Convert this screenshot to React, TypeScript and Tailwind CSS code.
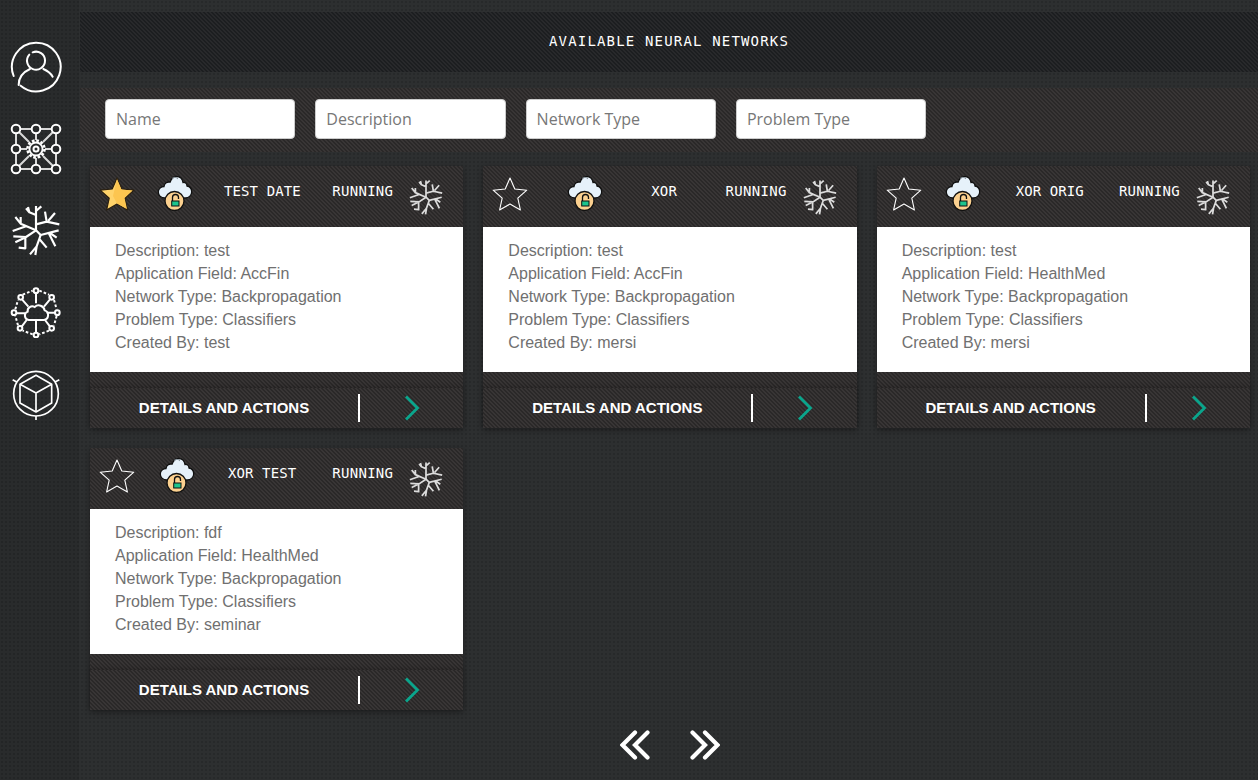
import React from 'react';

const dotted =
  'bg-[#2d2f30] bg-[radial-gradient(#27292a_1px,transparent_1px)] bg-[length:4px_4px]';
const striped =
  'bg-[#2a2828] bg-[linear-gradient(45deg,#383535_25%,transparent_25%,transparent_50%,#383535_50%,#383535_75%,transparent_75%)] bg-[length:4px_4px]';
const stripedDark =
  'bg-[#1c1e20] bg-[linear-gradient(45deg,#28292b_25%,transparent_25%,transparent_50%,#28292b_50%,#28292b_75%,transparent_75%)] bg-[length:4px_4px]';

const UserIcon = () => (
  <svg width="52" height="52" viewBox="30 63 156 156" fill="none" stroke="#fff" strokeWidth="6" strokeLinecap="round">
    <path d="M41 168A73 73 0 1 1 62 197" />
    <path d="M88 104A27 27 0 1 0 98 97" />
    <path d="M56 195C56 170 72 155 90 147M130 147C142 152 152 160 158 170" />
  </svg>
);

const NetworkIcon = () => {
  const xs = [6, 26, 46];
  return (
    <svg width="52" height="52" viewBox="0 0 52 52" fill="none" stroke="#fff" strokeWidth="2">
      <path stroke="#d8d8d8" d="M10 6h12M30 6h12M6 10v12M6 30v12M46 10v12M46 30v12M10 46h12M30 46h12M26 10v7M26 35v7M10 26h7M35 26h7M9 9l10 10M43 9L33 19M9 43l10-10M43 43L33 33" />
      {xs.map((x) =>
        xs.map((y) =>
          x === 26 && y === 26 ? null : <circle key={`${x}-${y}`} cx={x} cy={y} r="4.3" />,
        ),
      )}
      <circle cx="26" cy="26" r="2.5" />
      <circle cx="26" cy="26" r="6.5" strokeWidth="1.8" />
      <circle cx="26" cy="26" r="8.5" strokeWidth="2.6" strokeDasharray="2.7 1.75" />
    </svg>
  );
};

const TreeIcon = ({ size = 52, stroke = '#fff', width = 6.5 }: { size?: number; stroke?: string; width?: number }) => (
  <svg width={size} height={size} viewBox="30 19 156 156" fill="none" stroke={stroke} strokeWidth={width} strokeLinecap="butt" strokeLinejoin="round">
    <path d="M108 25V100M108 52L88 44L78 32M88 44L84 28M108 40L124 26" />
    <path d="M108 80L140 72L135 42M140 72L178 80M145 69L165 46" />
    <path d="M108 98L62 78L46 58M62 78L62 58M78 86L38 100" />
    <path d="M108 98L78 118L40 116M74 120L46 134M76 120L76 152L56 150" />
    <path d="M108 98L122 112L176 98M150 106L170 120M146 106L166 146" />
    <path d="M122 112L110 146L90 170M110 146L106 172M118 124L140 150" />
  </svg>
);

const CloudNetIcon = () => {
  const nodes = [
    [108, 62], [155, 82], [172, 128], [155, 175], [108, 195], [60, 175], [42, 128], [62, 82],
  ];
  return (
    <svg width="52" height="52" viewBox="30 48 156 156" fill="none" stroke="#fff" strokeWidth="6" strokeLinecap="butt">
      <path d="M86 150a13 13 0 0 1-3-25a14 14 0 0 1 21-14a18 18 0 0 1 30 10a15 15 0 0 1-2 29z" />
      <path d="M108 150V190M80 150L65 170M135 150L150 170M75 130H47M140 128H168M85 110L66 88M132 110L150 88M108 100V66" />
      <path strokeDasharray="8 6" d="M118 62L147 74M162 90L170 118M170 138L162 166M147 182L118 193M98 193L68 182M54 166L46 138M46 118L54 90M68 74L98 62" />
      {nodes.map(([x, y]) => (
        <circle key={`${x}-${y}`} cx={x} cy={y} r="7" fill="#2d2f30" />
      ))}
    </svg>
  );
};

const CubeIcon = () => (
  <svg width="52" height="52" viewBox="30 293 156 156" fill="none" stroke="#fff" strokeWidth="5" strokeLinejoin="round">
    <circle cx="108" cy="370" r="67" />
    <path d="M108 315L155 342V398L108 425L60 398V342z" />
    <path d="M60 342L108 368L155 342M108 368V425" />
    <path d="M38 328L50 335M178 328L165 335M108 437V449" />
  </svg>
);

const StarIcon = ({ filled }: { filled: boolean }) => (
  <svg width="36" height="36" viewBox="0 0 36 36" strokeLinejoin="round">
    {filled ? (
      <>
        <path d="M18 2l4.800 11 12 1.200-9 8 2.600 11.800L18 28l-10.400 6 2.600-11.800-9-8 12-1.200z" fill="#ffd36a" stroke="#2a1f10" strokeWidth="1.200" />
        <path d="M18 3l4.500 10.500 11 1L25.500 22 28 33 18 27.500 14 20z" fill="#fcc550" />
      </>
    ) : (
      <path d="M18 2l4.800 11 12 1.200-9 8 2.600 11.800L18 28l-10.400 6 2.600-11.800-9-8 12-1.200z" fill="none" stroke="#fff" strokeWidth="1.100" />
    )}
  </svg>
);

const CloudLockIcon = () => (
  <svg width="36" height="36" viewBox="0 0 36 36">
    <path d="M8 23C3.500 23 1.300 20 1.300 17S4 11.500 7 11.500C7.500 8 10.500 6.500 13 7.200C14.500 3 17 1.500 19.500 1.500C23 1.500 25.500 4 26 7.500C28 7 30 8.500 30 11C33 11.500 34.700 14 34.700 17S32 23 28.500 23z" fill="#e6f1fa" stroke="#111" strokeWidth="1.300" />
    <path d="M15 3.500a4 4 0 0 1 6 .5" fill="none" stroke="#8b97a0" strokeWidth="1" />
    <circle cx="17.500" cy="26" r="9.500" fill="#fbd08f" stroke="#111" strokeWidth="1.300" />
    <path d="M15.500 26v-3.500a3 3 0 0 1 6 0V24" fill="none" stroke="#111" strokeWidth="1.300" />
    <rect x="14.700" y="26" width="7.300" height="5" fill="#1cc48d" stroke="#111" strokeWidth="1" />
  </svg>
);

const DetailsChevron = () => (
  <svg width="16" height="28" viewBox="0 0 16 28" fill="none" stroke="#0aa58c" strokeWidth="2.800">
    <path d="M2 2.500L13.500 14L2 25.500" />
  </svg>
);

const PagerChevrons = ({ flip }: { flip?: boolean }) => (
  <svg width="30" height="30" viewBox="0 0 30 30" fill="none" stroke="#fff" strokeWidth="4.200" strokeLinecap="round" strokeLinejoin="miter" className={flip ? 'rotate-180' : ''}>
    <path d="M15 2.500L2.500 15L15 27.500" />
    <path d="M27.500 2.500L15 15L27.500 27.500" />
  </svg>
);

type Net = {
  name: string;
  starred?: boolean;
  description: string;
  field: string;
  owner: string;
  cloudClass: string;
  nameClass: string;
};

const networks: Net[] = [
  { name: 'TEST DATE', starred: true, description: 'test', field: 'AccFin', owner: 'test', cloudClass: 'ml-[22px]', nameClass: 'ml-[31px]' },
  { name: 'XOR', description: 'test', field: 'AccFin', owner: 'mersi', cloudClass: 'ml-[39px]', nameClass: 'ml-[48px]' },
  { name: 'XOR ORIG', description: 'test', field: 'HealthMed', owner: 'mersi', cloudClass: 'ml-[23px]', nameClass: 'ml-[35px]' },
  { name: 'XOR TEST', description: 'fdf', field: 'HealthMed', owner: 'seminar', cloudClass: 'ml-[24px]', nameClass: 'ml-[33px]' },
];

const NetworkCard = ({ net }: { net: Net }) => (
  <div className={`${striped} shadow-[0_2px_6px_rgba(0,0,0,0.35)]`}>
    <div className="flex h-[61px] items-center">
      <div className="mb-[6px] ml-[9px]">
        <StarIcon filled={!!net.starred} />
      </div>
      <div className={`mb-[7px] ${net.cloudClass}`}>
        <CloudLockIcon />
      </div>
      <span className={`mb-[10px] ${net.nameClass} font-['DejaVu_Sans_Mono',monospace] text-[14px] tracking-[0.1px] text-white`}>
        {net.name}
      </span>
      <span className="mb-[10px] ml-auto font-['DejaVu_Sans_Mono',monospace] text-[14px] tracking-[0.3px] text-white">
        RUNNING
      </span>
      <div className="mr-[19px] ml-[15px] flex">
        <TreeIcon size={36} stroke="#dcdcdc" width={7.5} />
      </div>
    </div>
    <div className="h-[145px] bg-white pt-[12px] pl-[25px] font-['Liberation_Sans',sans-serif] text-[16px] leading-[23px] text-[#707070]">
      <p>Description: {net.description}</p>
      <p>Application Field: {net.field}</p>
      <p>Network Type: Backpropagation</p>
      <p>Problem Type: Classifiers</p>
      <p>Created By: {net.owner}</p>
    </div>
    <div className={`mt-[16px] flex h-[40px] items-center shadow-[0_-2px_4px_rgba(0,0,0,0.18)] ${striped}`}>
      <span className="w-[268px] text-center font-['Liberation_Sans',sans-serif] text-[15px] font-bold text-white">
        DETAILS AND ACTIONS
      </span>
      <span className="h-[28px] w-[2px] bg-white" />
      <div className="ml-[44px] flex">
        <DetailsChevron />
      </div>
    </div>
  </div>
);

const filters = ['Name', 'Description', 'Network Type', 'Problem Type'];

export default function App() {
  return (
    <div className={`flex h-[780px] w-full overflow-hidden ${dotted}`}>
      <aside className="flex w-[79px] shrink-0 flex-col items-center gap-[29.700px] bg-[#292b2c] bg-[radial-gradient(#232526_1px,transparent_1px)] bg-[length:4px_4px] pt-[41px] pr-[7px]">
        <UserIcon />
        <NetworkIcon />
        <TreeIcon />
        <CloudNetIcon />
        <CubeIcon />
      </aside>
      <main className="min-w-0 flex-1 pt-[12px] pl-[1px]">
        <header className={`flex h-[60px] items-center justify-center pb-[2px] ${stripedDark} font-['DejaVu_Sans_Mono',monospace] text-[14px] tracking-[1.170px] text-white`}>
          AVAILABLE NEURAL NETWORKS
        </header>
        <div className={`mt-[16px] flex h-[64px] items-center gap-[20px] pb-[2px] pl-[25px] ${striped}`}>
          {filters.map((f) => (
            <input
              key={f}
              placeholder={f}
              className="h-[40px] w-[190.300px] rounded-[4px] border border-[#ccc] bg-white px-[10px] font-['Open_Sans',sans-serif] text-[16px] text-[#555] placeholder:text-[#777]"
            />
          ))}
        </div>
        <div className="mt-[14px] mr-[8px] ml-[10px] grid grid-cols-3 gap-x-[20px] gap-y-[20px]">
          {networks.map((n) => (
            <NetworkCard key={n.name} net={n} />
          ))}
        </div>
        <div className="mt-[20px] flex items-center justify-center gap-[40px] pl-[2px]">
          <PagerChevrons />
          <PagerChevrons flip />
        </div>
      </main>
    </div>
  );
}
